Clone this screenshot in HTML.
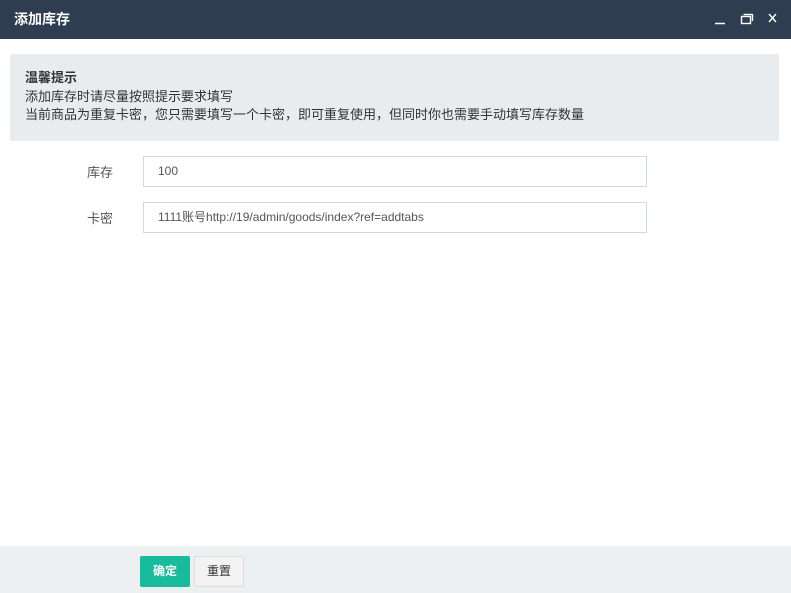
<!DOCTYPE html>
<html><head><meta charset="utf-8"><style>
*{margin:0;padding:0;box-sizing:border-box}
body{width:791px;height:593px;background:#fff;font-family:"Liberation Sans","Noto Sans CJK SC",sans-serif;position:relative;overflow:hidden;color:#333}
.hd{position:absolute;left:0;top:0;width:791px;height:39px;background:#2e3e50;color:#fff;font-size:14px;font-weight:bold;line-height:39px;padding-left:14px}
.tip{position:absolute;left:10px;top:54px;width:769px;height:87px;background:#e8ecef;border-radius:2px;font-size:13px;line-height:18.5px;padding:15px 0 0 15px;color:#333}
.lbl{position:absolute;font-size:13px;color:#555;left:87px}
.inp{position:absolute;left:143px;width:504px;height:31px;border:1px solid #d2d6de;font-size:12px;color:#555;line-height:29px;padding-left:14px}
.ft{position:absolute;left:0;top:546px;width:791px;height:47px;background:#ecf0f1}
.b1{position:absolute;left:140px;top:556px;width:50px;height:31px;background:#18bc9c;color:#fff;font-size:12px;font-weight:bold;text-align:center;line-height:31px;border-radius:2px}
.b2{position:absolute;left:194px;top:556px;width:50px;height:31px;background:#f3f3f3;border:1px solid #ddd;color:#333;font-size:12px;text-align:center;line-height:29px;border-radius:2px}
</style></head><body>
<div class="hd">添加库存</div>
<svg style="position:absolute;left:712px;top:12px" width="70" height="14">
<line x1="3" y1="11.5" x2="13" y2="11.5" stroke="#fff" stroke-width="1.5"/>
<rect x="29.5" y="4.5" width="9" height="7" fill="none" stroke="#fff" stroke-width="1.4"/>
<line x1="31.5" y1="2.5" x2="40.5" y2="2.5" stroke="#fff" stroke-width="1.4"/><line x1="40.5" y1="2" x2="40.5" y2="9" stroke="#fff" stroke-width="1.4"/>
<line x1="57" y1="2" x2="64" y2="10" stroke="#fff" stroke-width="1.4"/><line x1="64" y1="2" x2="57" y2="10" stroke="#fff" stroke-width="1.4"/>
</svg>
<div class="tip"><b>温馨提示</b><br>添加库存时请尽量按照提示要求填写<br>当前商品为重复卡密，您只需要填写一个卡密，即可重复使用，但同时你也需要手动填写库存数量</div>
<div class="lbl" style="top:162px">库存</div>
<div class="inp" style="top:156px">100</div>
<div class="lbl" style="top:208px">卡密</div>
<div class="inp" style="top:202px">1111账号http://19/admin/goods/index?ref=addtabs</div>
<div class="ft"></div>
<div class="b1">确定</div>
<div class="b2">重置</div>
</body></html>
